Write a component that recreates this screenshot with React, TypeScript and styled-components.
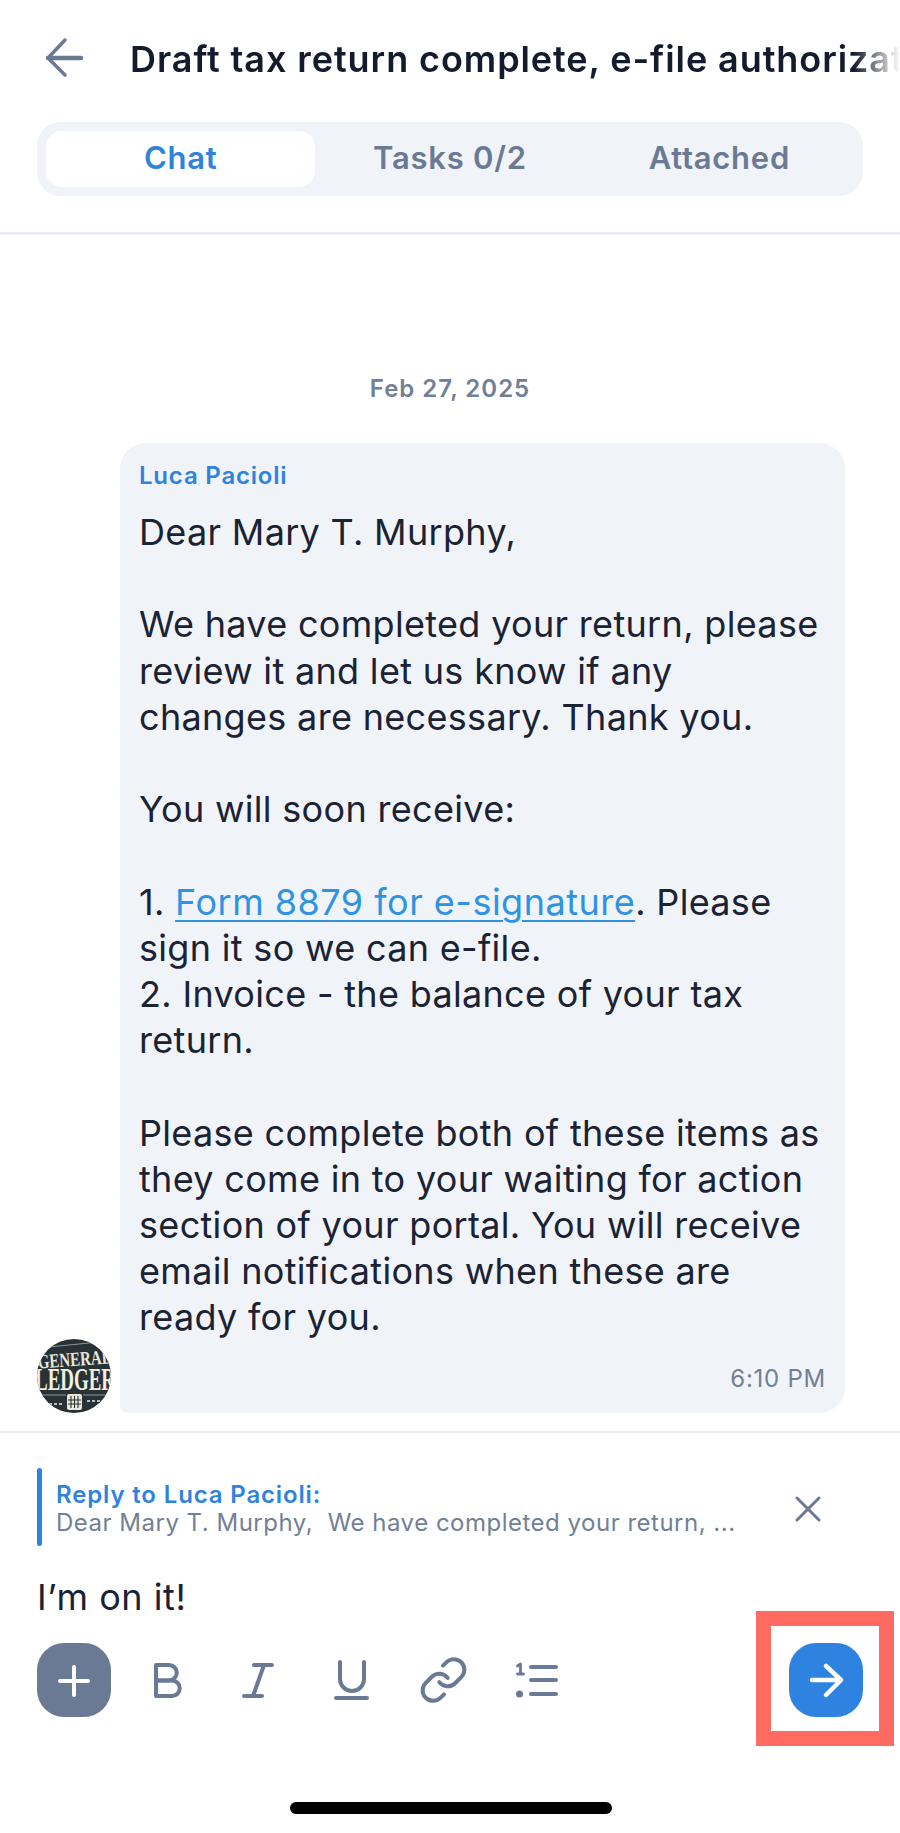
import React from "react";
import styled, { createGlobalStyle } from "styled-components";

const Global = createGlobalStyle`
  html, body { margin: 0; padding: 0; background: #fff; }
  body { font-family: "Inter", "Liberation Sans", sans-serif; -webkit-font-smoothing: antialiased; }
`;

const Page = styled.div`
  position: relative;
  width: 900px;
  height: 1833px;
  display: flex;
  flex-direction: column;
  overflow: hidden;
  background: #fff;
  color: #1a202c;
`;

const Header = styled.header`
  flex: none;
  box-sizing: border-box;
  border-bottom: 3px solid #e9ebf5;
  height: 235px;
`;

const TitleRow = styled.div`
  height: 122px;
  box-sizing: border-box;
  padding: 36px 0 0 46px;
  display: flex;
  align-items: flex-start;
  gap: 47px;
`;

const IconSvg = styled.svg`
  display: block;
  flex: none;
  overflow: visible;
  fill: none;
  stroke: #6b7a94;
  stroke-linecap: round;
  stroke-linejoin: round;
`;

const Title = styled.h1`
  margin: 0;
  flex: 1;
  min-width: 0;
  font-size: 36px;
  line-height: 46px;
  font-weight: 600;
  letter-spacing: 0.92px;
  color: #141b2d;
  white-space: nowrap;
  overflow: hidden;
  -webkit-mask-image: linear-gradient(to right, #000 94%, transparent 100%);
  mask-image: linear-gradient(to right, #000 94%, transparent 100%);
`;

const Tabs = styled.nav`
  width: 826px;
  height: 74px;
  margin-left: 37px;
  box-sizing: border-box;
  padding: 9px;
  border-radius: 24px;
  background: #f0f3f8;
  display: grid;
  grid-template-columns: repeat(3, 1fr);
`;

const Tab = styled.div<{ $active?: boolean }>`
  border-radius: 16px;
  display: flex;
  align-items: center;
  justify-content: center;
  padding-bottom: 4px;
  font-size: 31px;
  font-weight: 600;
  letter-spacing: 0.75px;
  color: ${(p) => (p.$active ? "#2f83dc" : "#6b7a94")};
  background: ${(p) => (p.$active ? "#fff" : "transparent")};
`;

const Messages = styled.main`
  height: 1198px;
  flex: none;
  box-sizing: border-box;
  border-bottom: 2px solid #eceef2;
  display: flex;
  flex-direction: column;
  padding-top: 137px;
`;

const DateLabel = styled.div`
  text-align: center;
  font-size: 24px;
  line-height: 34px;
  font-weight: 600;
  letter-spacing: 1px;
  color: #728097;
  margin-bottom: 37px;
`;

const MessageRow = styled.div`
  display: flex;
  align-items: flex-end;
  gap: 9px;
  padding-left: 37px;
`;

const Avatar = styled.div`
  width: 74px;
  height: 74px;
  border-radius: 50%;
  overflow: hidden;
  flex: none;
`;

const Bubble = styled.article`
  width: 725px;
  height: 970px;
  box-sizing: border-box;
  padding: 17px 19px 0;
  background: #f0f3f8;
  border-radius: 26px 26px 26px 8px;
`;

const Sender = styled.div`
  font-size: 24px;
  line-height: 32px;
  font-weight: 600;
  letter-spacing: 0.8px;
  color: #2f83dc;
  margin-bottom: 17px;
`;

const Body = styled.p`
  margin: 0;
  font-size: 36px;
  line-height: 46.2px;
  font-weight: 400;
  letter-spacing: 0.32px;
  color: #1a2233;
  white-space: nowrap;
`;

const DocLink = styled.a`
  color: #2f93e3;
  letter-spacing: 0.5px;
  text-decoration: underline;
  text-underline-offset: 5px;
  text-decoration-thickness: 2px;
`;

const Time = styled.div`
  margin-top: 22px;
  text-align: right;
  font-size: 24px;
  line-height: 32px;
  letter-spacing: 0.75px;
  color: #728097;
`;

const Composer = styled.section`
  flex: 1;
  padding: 35px 37px 0;
  display: flex;
  flex-direction: column;
`;

const ReplyBox = styled.div`
  display: flex;
  align-items: center;
`;

const ReplyBar = styled.div`
  width: 5px;
  height: 78px;
  border-radius: 3px;
  background: #2f83dc;
  flex: none;
`;

const ReplyText = styled.div`
  width: 685px;
  margin-left: 14px;
  font-size: 24px;
  line-height: 28px;
  padding-top: 3px;
`;

const ReplyTitle = styled.div`
  font-weight: 600;
  letter-spacing: 0.85px;
  color: #2f83dc;
`;

const ReplyPreview = styled.div`
  color: #728097;
  letter-spacing: 0.5px;
  white-space: pre;
`;

const CloseButton = styled.div`
  margin-left: 54px;
  margin-top: 3px;
`;

const Draft = styled.div`
  margin-top: 28px;
  font-size: 36px;
  line-height: 46px;
  letter-spacing: 0.55px;
  color: #1a2233;
`;

const Toolbar = styled.div`
  margin-top: 23px;
  display: flex;
  align-items: center;
  gap: 48px;
`;

const RoundButton = styled.div<{ $bg: string }>`
  position: relative;
  width: 74px;
  height: 74px;
  flex: none;
  border-radius: 27px;
  background: ${(p) => p.$bg};
`;

const AddButton = styled(RoundButton)`
  margin-right: -12px;
`;

const SendSlot = styled.div`
  margin-left: auto;
  position: relative;
`;

const Highlight = styled.div`
  position: absolute;
  left: -33px;
  top: -32px;
  width: 138px;
  height: 135px;
  box-sizing: border-box;
  border: 15px solid #ff6b61;
`;

const ButtonIcon = styled.svg`
  display: block;
  fill: none;
  stroke: #fff;
  stroke-linecap: round;
  stroke-linejoin: round;
`;

const HomeBar = styled.div`
  position: absolute;
  left: 290px;
  top: 1802px;
  width: 322px;
  height: 12px;
  border-radius: 6px;
  background: #000;
`;

const ICON = { width: 44, height: 44, viewBox: "0 0 44 44", strokeWidth: 4 };

const LOGO_FONT = '"Liberation Serif", serif';

function AvatarLogo() {
  return (
    <svg width="74" height="74" viewBox="0 0 74 74" style={{ display: "block" }}>
      <rect width="74" height="74" fill="#283136" />
      <path d="M12 8 L62 3" stroke="#8a9494" strokeWidth="1" />
      <text x="38" y="27" textAnchor="middle" fontFamily={LOGO_FONT} fontWeight="700" fontSize="20" textLength="74" lengthAdjust="spacingAndGlyphs" fill="#e8e8d8" transform="rotate(-4 37 25)">GENERAL</text>
      <text x="38" y="51" textAnchor="middle" fontFamily={LOGO_FONT} fontWeight="700" fontSize="31" textLength="80" lengthAdjust="spacingAndGlyphs" fill="#f0f0e0">LEDGER</text>
      <path d="M4 56 H29 M46 56 H72" stroke="#8f9a9a" strokeWidth="1.2" />
      <path d="M12 65 H26 M50 62 H66" stroke="#b8bfba" strokeWidth="2" strokeDasharray="3 2" />
      <rect x="30" y="55" width="15" height="16" rx="2" fill="#e8e8d8" />
      <path d="M34 57 V69 M37.5 57 V69 M41 57 V69 M31 61 H44 M31 65 H44" stroke="#283136" strokeWidth="1.1" />
    </svg>
  );
}

export default function App() {
  return (
    <Page>
      <Global />
      <Header>
        <TitleRow>
          <IconSvg width="37" height="44" viewBox="0 0 37 44" strokeWidth="3.5">
            <path d="M19 4 L2 22 L19 39" />
            <path d="M2 22 H35" strokeWidth="4.5" />
          </IconSvg>
          <Title>Draft tax return complete, e-file authorization pending</Title>
        </TitleRow>
        <Tabs>
          <Tab $active>Chat</Tab>
          <Tab>Tasks 0/2</Tab>
          <Tab>Attached</Tab>
        </Tabs>
      </Header>
      <Messages>
        <DateLabel>Feb 27, 2025</DateLabel>
        <MessageRow>
          <Avatar>
            <AvatarLogo />
          </Avatar>
          <Bubble>
            <Sender>Luca Pacioli</Sender>
            <Body>
              Dear Mary T. Murphy,
              <br />
              <br />
              We have completed your return, please
              <br />
              review it and let us know if any
              <br />
              changes are necessary. Thank you.
              <br />
              <br />
              You will soon receive:
              <br />
              <br />
              1. <DocLink>Form 8879 for e-signature</DocLink>. Please
              <br />
              sign it so we can e-file.
              <br />
              2. Invoice - the balance of your tax
              <br />
              return.
              <br />
              <br />
              Please complete both of these items as
              <br />
              they come in to your waiting for action
              <br />
              section of your portal. You will receive
              <br />
              email notifications when these are
              <br />
              ready for you.
            </Body>
            <Time>6:10 PM</Time>
          </Bubble>
        </MessageRow>
      </Messages>
      <Composer>
        <ReplyBox>
          <ReplyBar />
          <ReplyText>
            <ReplyTitle>Reply to Luca Pacioli:</ReplyTitle>
            <ReplyPreview>Dear Mary T. Murphy,  We have completed your return, ...</ReplyPreview>
          </ReplyText>
          <CloseButton>
            <IconSvg width="26" height="26" viewBox="0 0 26 26" strokeWidth="3">
              <path d="M2 2 L24 24 M24 2 L2 24" />
            </IconSvg>
          </CloseButton>
        </ReplyBox>
        <Draft>I’m on it!</Draft>
        <Toolbar>
          <AddButton $bg="#6b7a94">
            <ButtonIcon width="74" height="74" viewBox="0 0 74 74" strokeWidth="4">
              <path d="M37 24 V52 M23 38 H51" />
            </ButtonIcon>
          </AddButton>
          <IconSvg {...ICON}>
            <path d="M9 7 H22 a7.75 7.75 0 0 1 0 15.5 H9 Z" />
            <path d="M9 22.5 H25 a7.75 7.75 0 0 1 0 15.5 H9 Z" />
          </IconSvg>
          <IconSvg {...ICON}>
            <path d="M15 7 H33 M5 38 H23 M25 7 L14 38" />
          </IconSvg>
          <IconSvg {...ICON}>
            <path d="M9 4 V21 a12 12 0 0 0 24 0 V4" />
            <path d="M5 40 H36" />
          </IconSvg>
          <IconSvg {...ICON}>
            <g transform="translate(-4.7 -3.2) scale(2.1)" strokeWidth="1.9">
              <path d="M10 13a5 5 0 0 0 7.54.54l3-3a5 5 0 0 0-7.07-7.07l-1.72 1.71" />
              <path d="M14 11a5 5 0 0 0-7.54-.54l-3 3a5 5 0 0 0 7.07 7.07l1.71-1.71" />
            </g>
          </IconSvg>
          <IconSvg {...ICON}>
            <path d="M16 9 H41 M16 22 H41 M16 36 H41" />
            <path d="M2.5 8 L5.5 6 V16 M2.5 16 H8.5" strokeWidth="2.8" />
            <circle cx="4.5" cy="36" r="3.5" fill="#6b7a94" strokeWidth="0" />
          </IconSvg>
          <SendSlot>
            <Highlight />
            <RoundButton $bg="#2e83e0">
              <ButtonIcon width="74" height="74" viewBox="0 0 74 74" strokeWidth="4.5">
                <path d="M23 37 H51 M37 23 L52 37 L37 52" />
              </ButtonIcon>
            </RoundButton>
          </SendSlot>
        </Toolbar>
      </Composer>
      <HomeBar />
    </Page>
  );
}
